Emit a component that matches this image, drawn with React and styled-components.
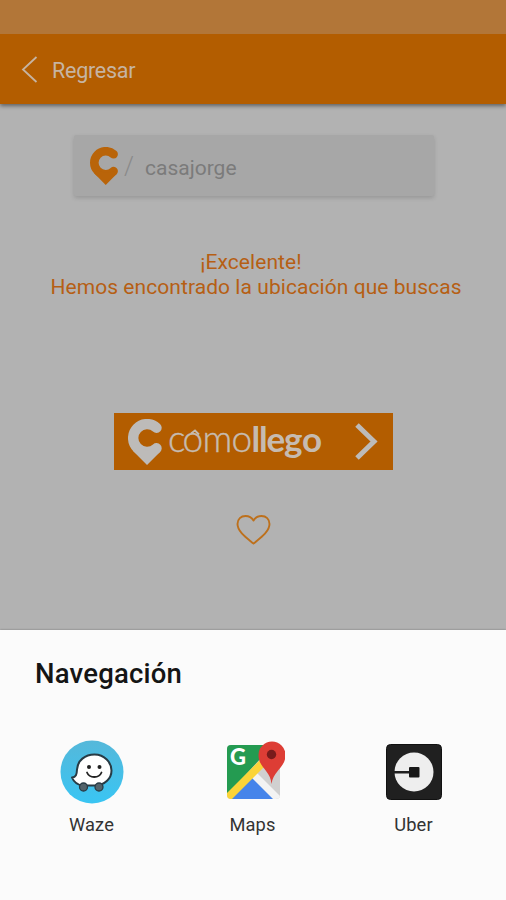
import React from 'react';
import styled, { createGlobalStyle } from 'styled-components';

const GlobalStyle = createGlobalStyle`
  * { box-sizing: border-box; }
  body { margin: 0; background: #b2b2b2; font-family: Roboto, "Noto Sans", sans-serif; }
  svg { display: block; flex: none; }
`;

const Screen = styled.div`
  width: 506px;
  height: 900px;
  display: flex;
  flex-direction: column;
  background: #b2b2b2;
  overflow: hidden;
`;

const StatusBar = styled.div`
  flex: none;
  height: 34px;
  background: #b27638;
`;

const Header = styled.header`
  flex: none;
  height: 70px;
  padding: 2px 0 0 21px;
  display: flex;
  align-items: center;
  gap: 13px;
  background: #b35d00;
  color: #c6b4a2;
  font-size: 21.5px;
  letter-spacing: -0.25px;
  box-shadow: 0 2px 4px rgba(0, 0, 0, 0.45);
  clip-path: inset(0 0 -10px 0);
`;

const Content = styled.main`
  flex: 1;
  display: flex;
  flex-direction: column;
  align-items: center;
`;

const SearchCard = styled.div`
  width: 360px;
  height: 61px;
  margin: 31px 0 0 2px;
  padding: 1px 0 0 16px;
  display: flex;
  align-items: center;
  background: #a7a7a7;
  border-radius: 2px;
  box-shadow: 0 2px 4px rgba(0, 0, 0, 0.15);
`;

const Slash = styled.span`
  margin-left: 5px;
  width: 21px;
  font-size: 25px;
  font-weight: 300;
  color: #8a8a8a;
`;

const Query = styled.span`
  margin-top: 3px;
  font-size: 21px;
  color: #7b7b7b;
`;

const Message = styled.p`
  margin: 54px 0 0 6px;
  text-align: center;
  font-size: 21px;
  line-height: 25px;
  letter-spacing: 0.06px;
  color: #b65f14;
  white-space: nowrap;
`;

const Greeting = styled.span`
  display: block;
  margin-right: 10px;
`;

const RouteButton = styled.button`
  width: 279px;
  height: 57px;
  margin-top: 113px;
  padding: 0 15px 0 14px;
  display: flex;
  align-items: center;
  border: 0;
  background: #b35d00;
`;

const Wordmark = styled.svg`
  margin-left: 4px;
  margin-right: 30px;
  overflow: visible;
  font-family: Lato, sans-serif;
`;

const Favorite = styled.div`
  margin-top: 44px;
`;

const Sheet = styled.section`
  flex: none;
  height: 270px;
  background: #fbfbfb;
  box-shadow: 0 0 2px rgba(0, 0, 0, 0.35);
`;

const SheetTitle = styled.h2`
  margin: 27px 0 0 35px;
  font-size: 27.5px;
  line-height: 34px;
  font-weight: 500;
  letter-spacing: 0.2px;
  color: #151515;
`;

const Apps = styled.div`
  margin: 49px 11px 0;
  display: grid;
  grid-template-columns: repeat(3, 161px);
`;

const AppItem = styled.div`
  display: flex;
  flex-direction: column;
  align-items: center;
  gap: 9px;
  font-size: 18.3px;
  line-height: 24px;
  letter-spacing: 0.1px;
  color: #333;
`;

function PinLogo({ width, height, color }) {
  return (
    <svg width={width} height={height} viewBox="0 0 35 46">
      <path
        d="M28.500 8.800A13.900 13.900 0 1 0 28.500 29.200"
        fill="none" stroke={color} strokeWidth="10.400" strokeLinecap="round"
      />
      <path fill={color} d="M5.300 32.200 19 46l13.500-13.500-4-3-9.500 2-10-3Z" />
    </svg>
  );
}

function WazeIcon() {
  return (
    <svg width="64" height="64" viewBox="0 0 64 64">
      <defs>
        <linearGradient id="wazeSky" x2="0" y2="1">
          <stop stopColor="#55b8da" />
          <stop offset="1" stopColor="#39c5f3" />
        </linearGradient>
      </defs>
      <circle cx="32" cy="32" r="31.500" fill="url(#wazeSky)" />
      <path
        d="M34.500 14.500c-9.500 0-17 6-17.500 15-.2 5-1 7.500-5 8 2 5 6 7.500 11 8h12.500C45 45 51.500 38.500 51.500 30.500s-7-16-17-16Z"
        fill="#fff" stroke="#283b45" strokeWidth="2" strokeLinejoin="round"
      />
      <circle cx="23.500" cy="47" r="4" fill="#53636b" stroke="#283b45" strokeWidth="1.300" />
      <circle cx="39" cy="47" r="4" fill="#53636b" stroke="#283b45" strokeWidth="1.300" />
      <circle cx="29" cy="27" r="2" fill="#222" />
      <circle cx="39.500" cy="27" r="2" fill="#222" />
      <path d="M27 32.500c2.500 6 12 6 14.500 0" fill="none" stroke="#222" strokeWidth="1.800" strokeLinecap="round" />
    </svg>
  );
}

function MapsIcon() {
  return (
    <svg width="64" height="64" viewBox="0 0 64 64">
      <defs>
        <clipPath id="mapTile"><rect x="6" y="5" width="53" height="54" rx="4" /></clipPath>
      </defs>
      <g clipPath="url(#mapTile)">
        <rect x="6" y="5" width="53" height="54" fill="#d0d0d0" />
        <path d="M6 5h46L6 55Z" fill="#249b51" />
        <path d="M9 60 33 36l24 24Z" fill="#4584ea" />
        <path d="M31 38 36 33 60 57v4h-6Z" fill="#f3f3f3" />
        <path d="M4 55 39 20l5 6L10 60H4Z" fill="#fbd438" />
      </g>
      <text x="9" y="25" fill="#fff" fontFamily="Lato, sans-serif" fontWeight="900" fontSize="22">G</text>
      <path d="M50.500 44c-1-14-13-16-13-29a13.500 13.500 0 0 1 27 0c0 13-12 15-14 29Z" fill="#dd3d35" />
      <circle cx="50.500" cy="14.500" r="4.700" fill="#781b1b" />
    </svg>
  );
}

function UberIcon() {
  return (
    <svg width="64" height="64" viewBox="0 0 64 64">
      <rect x="4.500" y="4.500" width="55" height="55" rx="4" fill="#202020" stroke="#111" />
      <circle cx="32" cy="32" r="19.500" fill="#eee" />
      <path d="M12 31h18v2.500H12Z" fill="#202020" />
      <rect x="27" y="27" width="10.500" height="10.500" rx="1" fill="#181818" />
    </svg>
  );
}

const apps = [
  { name: 'Waze', Icon: WazeIcon },
  { name: 'Maps', Icon: MapsIcon },
  { name: 'Uber', Icon: UberIcon },
];

export default function App() {
  return (
    <Screen>
      <GlobalStyle />
      <StatusBar />
      <Header>
        <svg width="18" height="28" viewBox="0 0 18 28" fill="none" stroke="#c6b4a2" strokeWidth="1.800">
          <path d="M15.500 1 2 13.500 15.500 26" />
        </svg>
        <span>Regresar</span>
      </Header>
      <Content>
        <SearchCard>
          <PinLogo width={29} height={38} color="#b96409" />
          <Slash>/</Slash>
          <Query>casajorge</Query>
        </SearchCard>
        <Message>
          <Greeting>¡Excelente!</Greeting>
          Hemos encontrado la ubicación que buscas
        </Message>
        <RouteButton>
          <PinLogo width={35} height={46} color="#bdbbb9" />
          <Wordmark width="158" height="54" viewBox="0 0 158 54" fill="#c6bbb0">
            <text x="1 15.500 35.500 64.500" y="37" fontSize="37" fontWeight="300" stroke="#c6bbb0" strokeWidth="0.400">como</text>
            <path d="m24 18.500 4-3 4 4" fill="none" stroke="#c6bbb0" strokeWidth="1.800" />
            <text x="84.500 92 99.500 117 135" y="37" fontSize="35" fontWeight="700">llego</text>
          </Wordmark>
          <svg width="23" height="38" viewBox="0 0 23 38" fill="none" stroke="#bdbbb9" strokeWidth="5">
            <path d="m2 2 17 16.500L2 35" />
          </svg>
        </RouteButton>
        <Favorite>
          <svg width="36" height="32" viewBox="0 0 36 32" fill="none" stroke="#bd701c" strokeWidth="1.900" strokeLinejoin="round">
            <path d="M18.500 29.500C12.500 24.500 2.500 18 2.500 10c0-5 3.500-8 8-8 3.500 0 6.500 2 8 4.500 1.500-2.500 4.500-4.500 8-4.500 4.500 0 8 3 8 8 0 8-10 14.500-16 19.500Z" />
          </svg>
        </Favorite>
      </Content>
      <Sheet>
        <SheetTitle>Navegación</SheetTitle>
        <Apps>
          {apps.map(({ name, Icon }) => (
            <AppItem key={name}>
              <Icon />
              {name}
            </AppItem>
          ))}
        </Apps>
      </Sheet>
    </Screen>
  );
}
